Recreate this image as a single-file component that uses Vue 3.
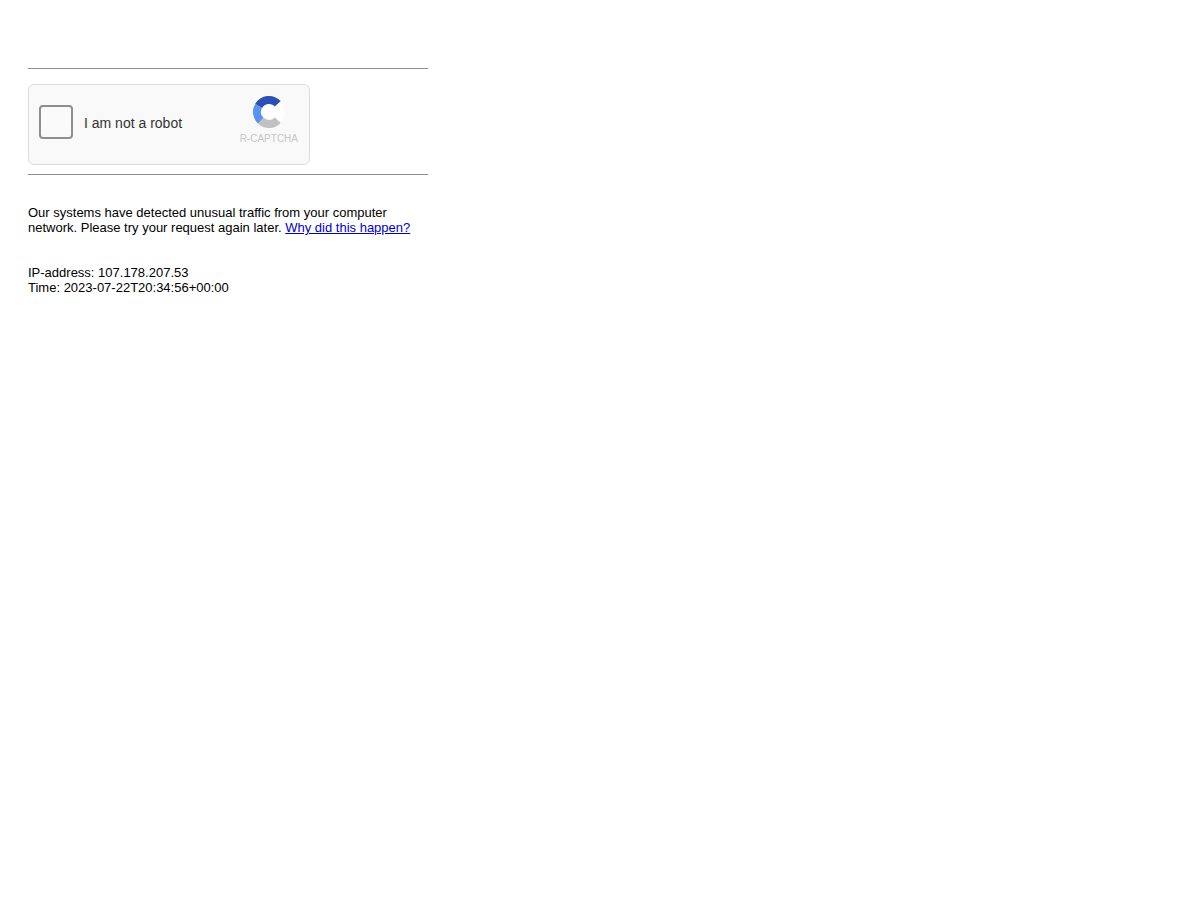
<script setup>
const cx = 16
const cy = 16
const outer = 16
const inner = 8
function pt(r, deg) {
  const a = (deg * Math.PI) / 180
  return `${(cx + r * Math.cos(a)).toFixed(2)} ${(cy + r * Math.sin(a)).toFixed(2)}`
}
function seg(start, end) {
  const large = end - start > 180 ? 1 : 0
  return `M${pt(outer, start)} A${outer} ${outer} 0 ${large} 1 ${pt(outer, end)} L${pt(inner, end)} A${inner} ${inner} 0 ${large} 0 ${pt(inner, start)} Z`
}
const arcs = [
  { d: seg(-43, 43), fill: '#ffffff' },
  { d: seg(-150, -43), fill: '#2b4fb4' },
  { d: seg(133, 210), fill: '#5b94ee' },
  { d: seg(43, 133), fill: '#c1c1c1' },
]
</script>

<template>
  <main class="page">
    <hr class="rule" />
    <div class="captcha">
      <span class="box"></span>
      <span class="label">I am not a robot</span>
      <div class="brand">
        <svg class="logo" width="32" height="32" viewBox="0 0 32 32" aria-hidden="true">
          <circle cx="16" cy="16" r="8.5" fill="#fff" />
          <path v-for="a in arcs" :key="a.fill" :d="a.d" :fill="a.fill" />
        </svg>
        <span class="brand-name">R-CAPTCHA</span>
      </div>
    </div>
    <hr class="rule" />
    <p class="message">
      Our systems have detected unusual traffic from your computer network. Please try your request again later.
      <a href="#" class="why">Why did this happen?</a>
    </p>
    <p class="meta">
      IP-address: 107.178.207.53<br />
      Time: 2023-07-22T20:34:56+00:00
    </p>
  </main>
</template>

<style scoped>
.page {
  width: 400px;
  padding: 68px 0 0 28px;
  font-family: "Liberation Sans", Arial, sans-serif;
  font-size: 13px;
  line-height: 15px;
  color: #000;
}
.rule {
  height: 1px;
  margin: 0;
  border: 0;
  background: #8c8c8c;
}
.captcha {
  box-sizing: border-box;
  display: flex;
  align-items: flex-start;
  width: 282px;
  height: 81px;
  margin: 15px 0 9px;
  padding: 20px 11px 0 10px;
  border: 1px solid #dcdcdc;
  border-radius: 6px;
  background: #f9f9f9;
}
.box {
  box-sizing: border-box;
  flex: none;
  width: 34px;
  height: 34px;
  border: 2px solid #8e8e8e;
  border-radius: 4px;
  background: #fafafa;
}
.label {
  margin: 10px 0 0 11px;
  font-size: 14px;
  line-height: 16px;
  color: #333;
}
.brand {
  display: flex;
  flex-direction: column;
  align-items: center;
  margin: -9px 0 0 auto;
}
.logo {
  display: block;
}
.brand-name {
  margin-top: 5px;
  font-size: 10px;
  line-height: 12px;
  color: #c6c6c6;
}
.message {
  margin: 30px 0 0;
}
.why {
  color: #0000cc;
}
.meta {
  margin: 30px 0 0;
}
</style>
